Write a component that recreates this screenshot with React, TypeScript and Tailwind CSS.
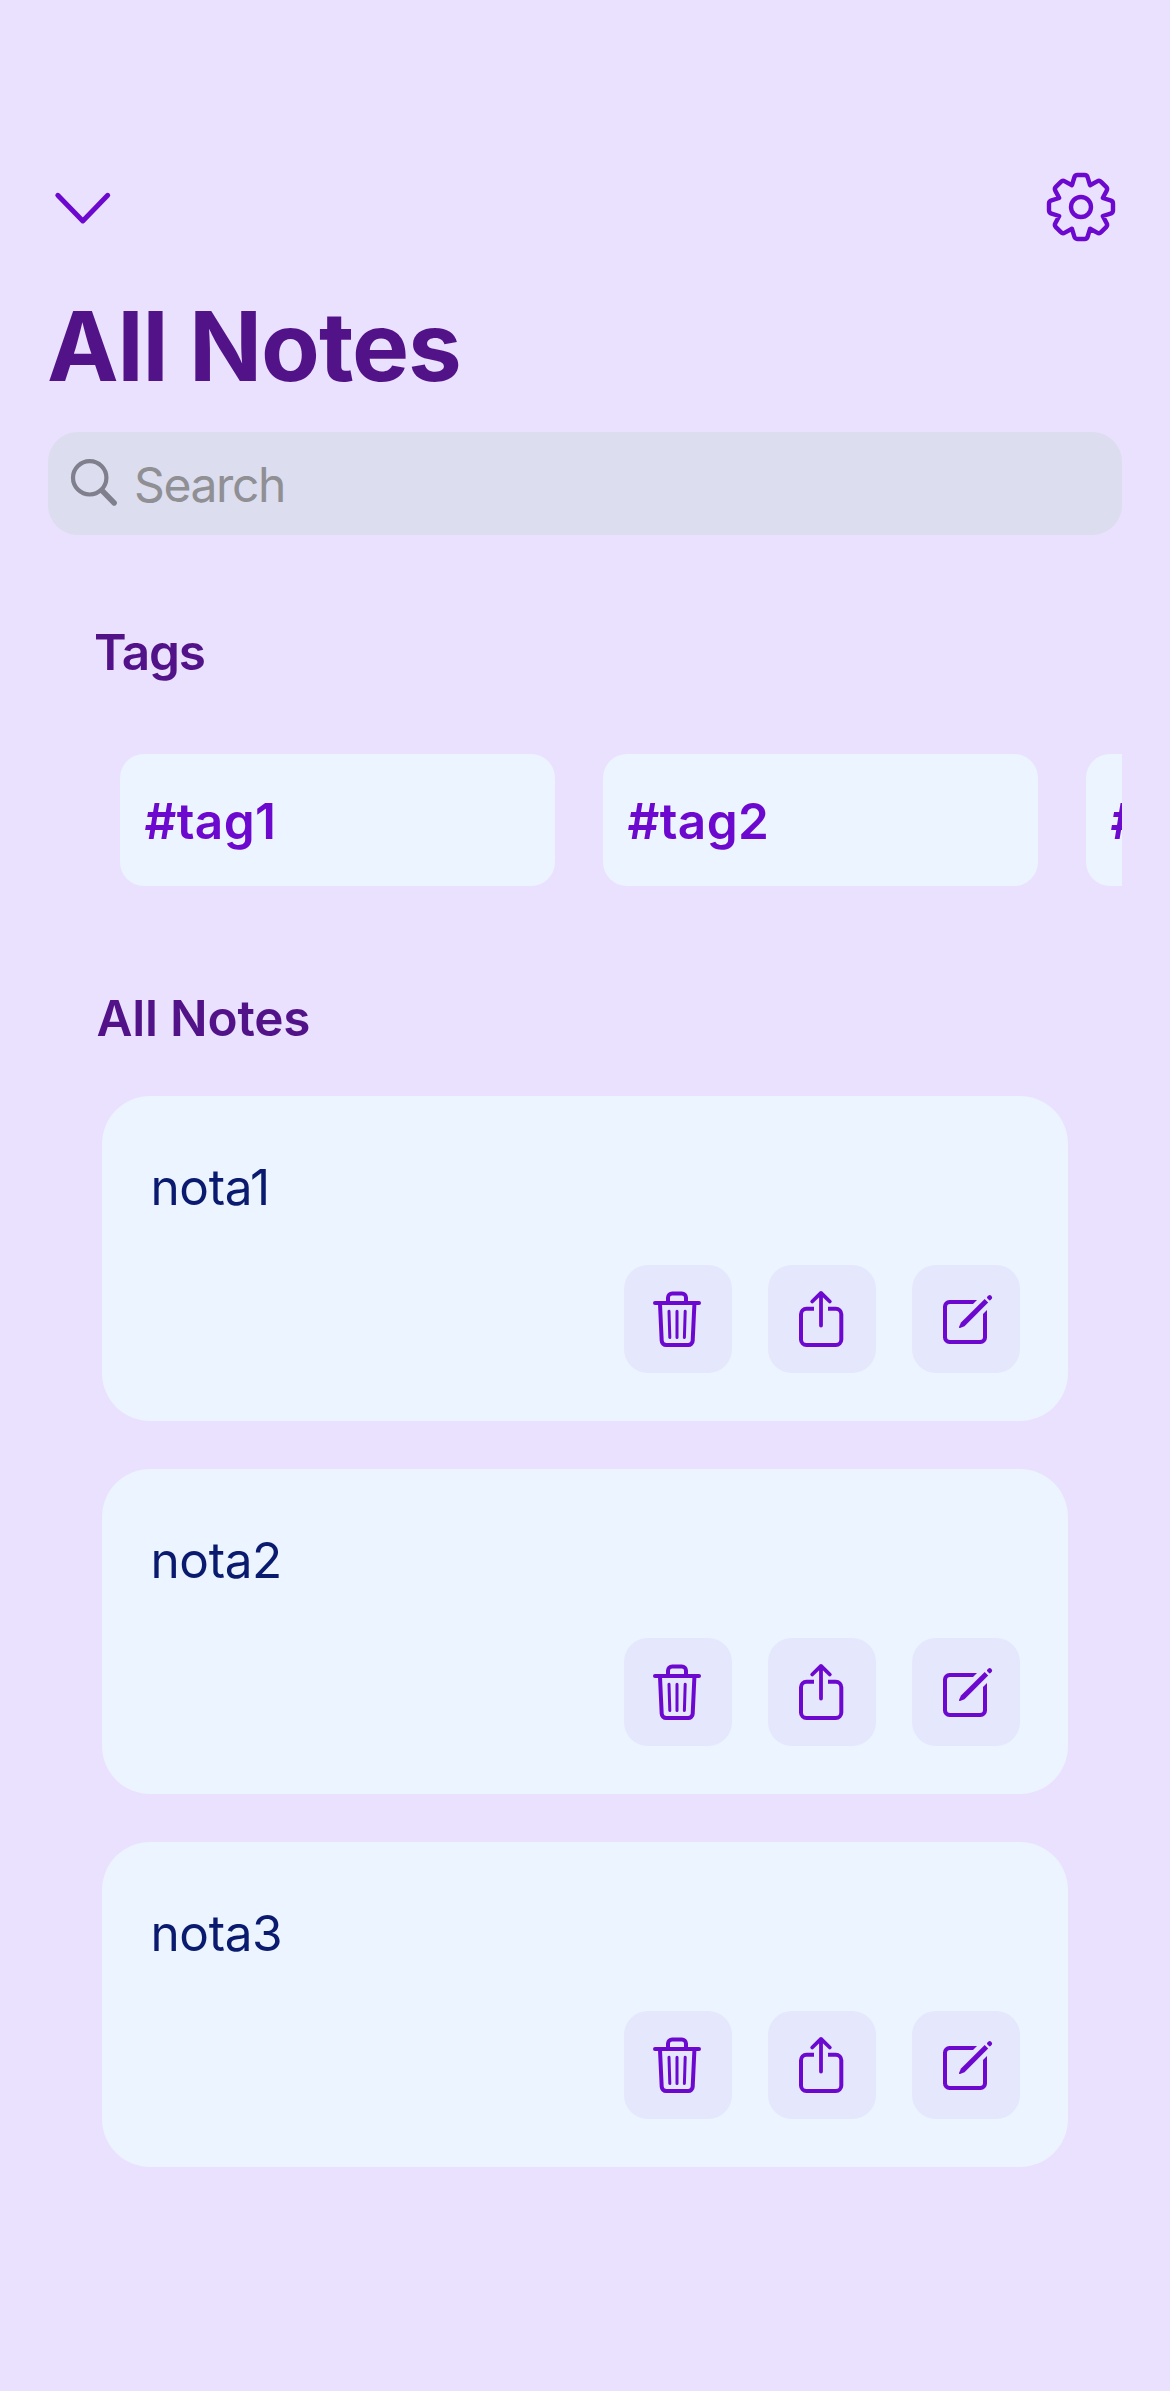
import React from "react";

const NOTES = ["nota1", "nota2", "nota3"];
const TAGS = ["#tag1", "#tag2", "#tag3"];

// Outline of an eight-toothed cog centred on the origin.
function gearPath() {
  const tooth = [
    [-9, -21.8], [-6.7, -29.5], [-6, -32], [-3.6, -32],
    [3.6, -32], [6, -32], [6.7, -29.5], [9, -21.8],
  ];
  let d = "";
  for (let i = 0; i < 8; i++) {
    const a = (i * Math.PI) / 4;
    const p = tooth.map(([x, y]) =>
      `${(x * Math.cos(a) - y * Math.sin(a)).toFixed(2)} ${(x * Math.sin(a) + y * Math.cos(a)).toFixed(2)}`);
    d += `${i ? "L" : "M"}${p[0]}L${p[1]}Q${p[2]} ${p[3]}L${p[4]}Q${p[5]} ${p[6]}L${p[7]}`;
  }
  return d + "Z";
}

const ChevronDown = () => (
  <svg viewBox="0 0 60 36" className="h-9 w-15" fill="none" stroke="currentColor" strokeWidth="5" strokeLinecap="round" strokeLinejoin="round">
    <path d="M4.8 6.3 29.8 31.9 54.7 6.3" />
  </svg>
);

const Gear = () => (
  <svg viewBox="-36 -36 72 72" className="size-18" fill="none" stroke="currentColor" strokeWidth="4.4" strokeLinejoin="round">
    <path d={gearPath()} />
    <circle r="10" />
  </svg>
);

const SearchIcon = () => (
  <svg viewBox="0 0 48 48" className="size-12 overflow-visible" fill="none" stroke="currentColor" strokeLinecap="round">
    <circle cx="20.7" cy="17.8" r="16.7" strokeWidth="4.2" />
    <path d="M33 30.5 45.2 43" strokeWidth="5.4" />
  </svg>
);

const Trash = () => (
  <svg viewBox="0 0 108 108" className="size-27" fill="none" stroke="currentColor" strokeWidth="4" strokeLinecap="round">
    <path d="M31 38H75" />
    <path d="M44 37v-4.4a4.2 4.2 0 0 1 4.2-4.2h9.6a4.2 4.2 0 0 1 4.2 4.2V37" />
    <path d="M36 39 37.7 75.6a4.5 4.5 0 0 0 4.5 4.4h22a4.5 4.5 0 0 0 4.5-4.4L70.4 39" />
    <path d="M45 46.2 45.8 72.5M53 46.2V72.5M61.2 46.2 60.4 72.5" strokeWidth="3" />
  </svg>
);

const Share = () => (
  <svg viewBox="0 0 108 108" className="size-27" fill="none" stroke="currentColor" strokeWidth="4">
    <path d="M46 43.7H38.5a5.5 5.5 0 0 0-5.5 5.5V74.5a5.5 5.5 0 0 0 5.5 5.5H67.8a5.5 5.5 0 0 0 5.5-5.5V49.2a5.5 5.5 0 0 0-5.5-5.5H60" />
    <path d="M53 28V60.5M44.2 36.5 53 27.9 61.8 36.5" strokeLinecap="round" strokeLinejoin="round" strokeWidth="3.8" />
  </svg>
);

const Compose = () => (
  <svg viewBox="0 0 108 108" className="size-27" fill="currentColor">
    <path d="M65 35H37.5a6.5 6.5 0 0 0-6.5 6.5V72.5a6.5 6.5 0 0 0 6.5 6.5H68.5a6.5 6.5 0 0 0 6.5-6.5V45L71 49V72a3 3 0 0 1-3 3H38a3 3 0 0 1-3-3V42a3 3 0 0 1 3-3H61Z" />
    <path d="M47 62Q46.8 63.2 48 63L52.5 61.2 76.2 37.5 72.7 34 49 57.6Z" />
    <path d="M75.2 31.7 76.5 30.4Q77.7 29.4 79 30.6 81 32.3 79.8 33.8L78.3 35.3Q77.6 35.7 77 35.1L75.2 33.3Q74.7 32.5 75.2 31.7Z" />
  </svg>
);

const ActionButton = ({ label, children }: { label: string; children: React.ReactNode }) => (
  <button aria-label={label} className="size-27 rounded-3xl bg-[#e5e7fd] text-[#6d09cf]">{children}</button>
);

export default function App() {
  return (
    <main className="h-[2391px] w-[1170px] overflow-hidden bg-[#eae1ff] px-12 pt-[171px] font-['Inter',sans-serif]">
      <header className="flex h-18 items-center justify-between pr-[5px] pl-[5px] text-[#6d09cf]">
        <button aria-label="Collapse"><ChevronDown /></button>
        <button aria-label="Settings"><Gear /></button>
      </header>
      <h1 className="mt-[43px] -ml-px h-[120px] text-[96px] leading-[120px] font-bold tracking-[-1.1px] text-[#531388]">All Notes</h1>
      <label className="mt-[26px] flex h-[103px] items-center rounded-[30px] bg-[#dcddee] pl-[21px] text-[#7f7f8d]">
        <SearchIcon />
        <span className="mt-[2px] ml-[17px] text-[48px] tracking-[-1.4px] text-[#8f8f94]">Search</span>
      </label>
      <h2 className="mt-[87px] ml-[46px] h-[60px] text-[49.5px] leading-[60px] font-semibold tracking-[-1.2px] text-[#531388]">Tags</h2>
      <div className="mt-[72px] flex gap-12 overflow-hidden pl-18">
        {TAGS.map((t) => (
          <div key={t} className="flex h-[132px] w-[435px] shrink-0 items-center rounded-3xl bg-[#ebf4ff] pt-[2px] pl-[24.5px] text-[49.5px] font-semibold tracking-[0.4px] text-[#6d09cf]">{t}</div>
        ))}
      </div>
      <h2 className="mt-[102px] ml-[48.5px] h-[60px] text-[49.5px] leading-[60px] font-semibold tracking-[-0.2px] text-[#531388]">All Notes</h2>
      <div className="mx-[54px] mt-[48px] flex flex-col gap-12">
        {NOTES.map((n) => (
          <article key={n} className="h-[325px] rounded-[48px] bg-[#ebf4ff] px-12 pt-[61px]">
            <p className="h-[60px] pl-[0.5px] text-[49.5px] leading-[60px] tracking-[-0.4px] text-[#0a1a6e]">{n}</p>
            <div className="mt-12 flex justify-end gap-9">
              <ActionButton label="Delete"><Trash /></ActionButton>
              <ActionButton label="Share"><Share /></ActionButton>
              <ActionButton label="Edit"><Compose /></ActionButton>
            </div>
          </article>
        ))}
      </div>
    </main>
  );
}
